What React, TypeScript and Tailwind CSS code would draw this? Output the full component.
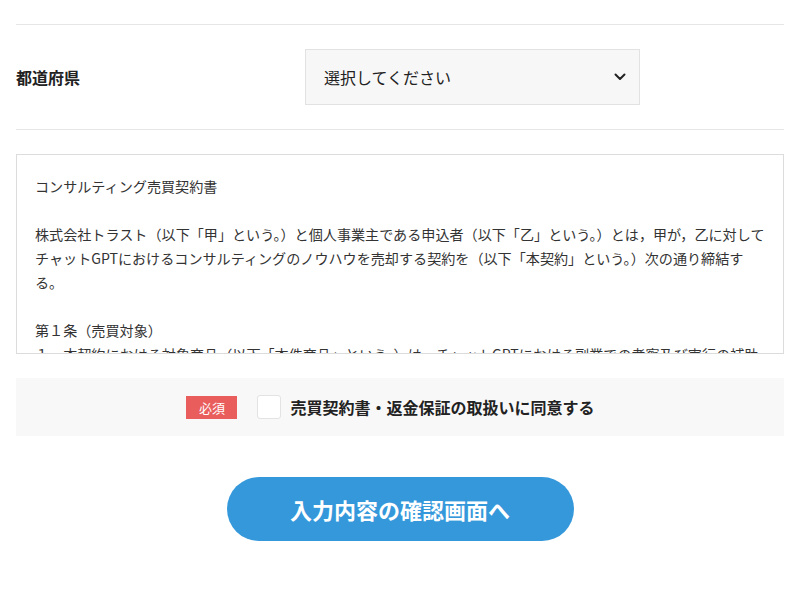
import React from "react";

const lines: string[] = [
  "コンサルティング売買契約書",
  "",
  "株式会社トラスト（以下「甲」という。）と個人事業主である申込者（以下「乙」という。）とは，甲が，乙に対して",
  "チャットGPTにおけるコンサルティングのノウハウを売却する契約を（以下「本契約」という。）次の通り締結す",
  "る。",
  "",
  "第１条（売買対象）",
  "１　本契約における対象商品（以下「本件商品」という。）は，チャットGPTにおける副業での考察及び実行の補助",
];

export default function App() {
  return (
    <div
      className="w-[800px] h-[600px] bg-white px-4 pt-6 text-[#222]"
      style={{ fontFamily: '"Noto Sans CJK JP", "Noto Sans", sans-serif' }}
    >
      <div className="border-t border-b border-[#e6e6e6] py-6 flex items-center">
        <div className="w-[289px] text-[16px] font-bold leading-none">都道府県</div>
        <div className="w-[335px] h-[56px] bg-[#f7f7f7] border border-[#e2e2e2] flex items-center justify-between pl-[18px] pr-[13px]">
          <span className="text-[16px] leading-none text-[#222]">選択してください</span>
          <svg width="12" height="8" viewBox="0 0 12 8" fill="none">
            <polyline points="1.5,1.5 6,6 10.5,1.5" stroke="#222" strokeWidth="2" strokeLinecap="round" strokeLinejoin="round" />
          </svg>
        </div>
      </div>

      <div className="mt-6 h-[200px] border border-[#dcdcdc] overflow-hidden pl-[18px] pt-[19px] text-[14.1px] leading-[24px] text-[#333]">
        {lines.map((l, i) => (
          <div key={i} className="whitespace-nowrap h-[24px]">
            {l === "" ? "\u00a0" : l}
          </div>
        ))}
      </div>

      <div className="mt-6 h-[58px] bg-[#f8f8f8] flex items-center justify-center pr-[19px]">
        <span className="w-[51px] h-[23px] bg-[#e95d5d] text-white text-[13px] flex items-center justify-center leading-none">必須</span>
        <span className="ml-5 w-[24px] h-[24px] bg-white border border-[#e3e3e3] rounded-[3px]"></span>
        <span className="ml-[9px] text-[16px] font-bold leading-none text-[#222]">売買契約書・返金保証の取扱いに同意する</span>
      </div>

      <div className="mt-[41px] flex justify-center">
        <button className="w-[347px] h-[64px] rounded-full bg-[#3498db] text-white text-[22px] font-bold flex items-center justify-center leading-none">
          入力内容の確認画面へ
        </button>
      </div>
    </div>
  );
}
